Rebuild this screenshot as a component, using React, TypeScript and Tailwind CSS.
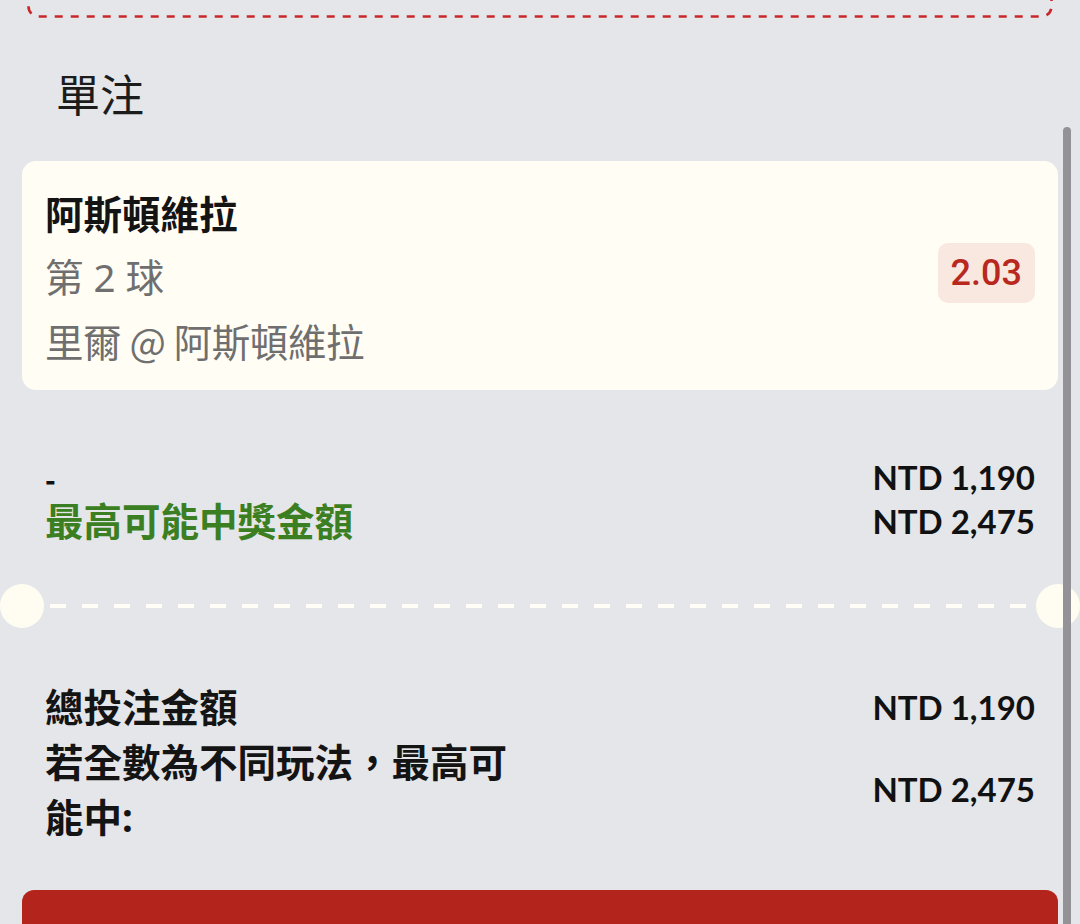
import React from "react";

const cjk = "font-['Noto_Sans','Noto_Sans_CJK_TC',sans-serif]";
const cjkOnly = "font-['Noto_Sans_CJK_TC',sans-serif]";
const lato = "font-['Lato','Noto_Sans_CJK_TC',sans-serif]";

function Divider() {
  return (
    <div className="-mx-[22px] mt-[41px] flex items-center">
      <div className="h-[44px] w-[44px] shrink-0 rounded-full bg-[#fffdf2]" />
      <div className="ml-[6px] mr-[8px] h-[4px] flex-1 bg-[repeating-linear-gradient(90deg,#fffdf6_0_16px,transparent_16px_32px)]" />
      <div className="h-[44px] w-[44px] shrink-0 rounded-full bg-[#fffdf2]" />
    </div>
  );
}

export default function App() {
  return (
    <div className="relative h-[924px] w-[1080px] overflow-hidden bg-[#e4e6e9]">
      {/* scrollbar thumb */}
      <div className="absolute left-[1063px] top-[127px] z-10 h-[820px] w-[8px] rounded-full bg-[#939397]" />

      <div className="px-[22px]">
        {/* previous block, cut off at the top */}
        <div className="mx-[5px] -mt-[24px] h-[42px]">
          <svg width="1026" height="42" viewBox="0 0 1026 42" className="block">
            <rect x="1.5" y="1.5" width="1023" height="39" rx="10" fill="none" stroke="#c9282a" strokeWidth="2.6" strokeDasharray="8 8" />
          </svg>
        </div>

        <h2 className={`${cjk} mt-[47px] pl-[34px] text-[44px] leading-[60px] text-[#1c1c1c]`}>單注</h2>

        {/* selection card */}
        <div className="mt-[36px] flex items-center justify-between rounded-[14px] bg-[#fffdf4] pb-[18px] pl-[23px] pr-[23px] pt-[22px]">
          <div className={`${cjk} text-[38.5px]`}>
            <div className="font-bold leading-[63px] text-[#141414]">阿斯頓維拉</div>
            <div className="leading-[63px] text-[#6f6f6f]">第 2 球</div>
            <div className={`${cjkOnly} leading-[63px] tracking-[-0.4px] text-[#6f6f6f]`}>里爾 @ 阿斯頓維拉</div>
          </div>
          <div className="mb-[10px] rounded-[10px] bg-[#f9e8e0] px-[13px] py-[7px] font-['Roboto',sans-serif] text-[36px] font-medium leading-[46px] text-[#b8281e]">
            2.03
          </div>
        </div>

        {/* potential payout */}
        <div className="mt-[65px] flex justify-between px-[23px]">
          <div>
            <div className={`${cjkOnly} h-[44px] pt-[10px] text-[28px] font-black leading-[28px] text-[#111]`}>-</div>
            <div className={`${cjk} text-[38.5px] font-bold leading-[44px] text-[#3b7f22]`}>最高可能中獎金額</div>
          </div>
          <div className={`${lato} text-right text-[33px] font-bold leading-[44px] text-[#111]`}>
            <div>NTD 1,190</div>
            <div>NTD 2,475</div>
          </div>
        </div>

        <Divider />

        {/* totals */}
        <div className="mt-[52px] flex flex-col px-[23px]">
          <div className="flex items-center justify-between">
            <div className={`${cjk} text-[38.5px] font-bold leading-[55px] text-[#141414]`}>總投注金額</div>
            <div className={`${lato} text-[33px] font-bold text-[#111]`}>NTD 1,190</div>
          </div>
          <div className="flex items-center justify-between">
            <div className={`${cjk} w-[490px] text-[38.5px] font-bold leading-[55px] text-[#141414]`}>
              若全數為不同玩法，最高可能中:
            </div>
            <div className={`${lato} text-[33px] font-bold text-[#111]`}>NTD 2,475</div>
          </div>
        </div>

        {/* place bet button */}
        <div className="mt-[45px] h-[80px] rounded-[12px] bg-[#b3241c]" />
      </div>
    </div>
  );
}
